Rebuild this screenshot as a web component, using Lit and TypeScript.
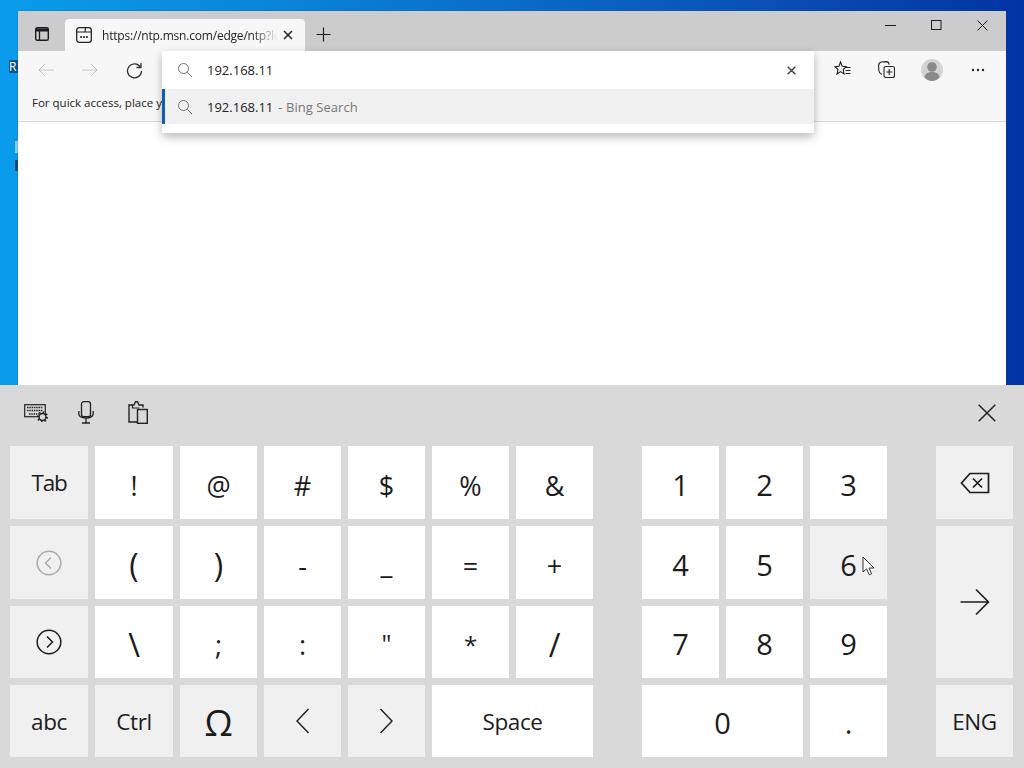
import { LitElement, html, css, svg } from "lit";
import { customElement } from "lit/decorators.js";

const ic = (w: number, h: number, body: unknown, cls = "") =>
  html`<svg class="ic ${cls}" width=${w} height=${h} viewBox="0 0 ${w} ${h}" fill="none" stroke="currentColor" stroke-width="1">${body}</svg>`;

const searchIcon = ic(16, 16, svg`<circle cx="6.5" cy="6.5" r="5"/><path d="M10.2 10.2L15 15"/>`, "search");
const chevL = ic(15, 26, svg`<path d="M13.5 1L2 13l11.5 12" stroke-width="1.4"/>`);
const chevR = ic(15, 26, svg`<path d="M1.5 1L13 13 1.5 25" stroke-width="1.4"/>`);
const circleL = ic(26, 26, svg`<circle cx="13" cy="13" r="11.8" stroke-width="1.5"/><path d="M15 7.5L9.5 13l5.5 5.5" stroke-width="1.5"/>`);
const circleR = ic(26, 26, svg`<circle cx="13" cy="13" r="11.8" stroke-width="1.5"/><path d="M11 7.5l5.5 5.5-5.5 5.5" stroke-width="1.5"/>`);
const backspace = ic(30, 22, svg`<path d="M28.5 1.5H10L1.5 11 10 20.5h18.5z" stroke-width="1.7"/><path d="M13 6.5l9 9M22 6.5l-9 9" stroke-width="1.7"/>`);
const enterArrow = ic(30, 28, svg`<path d="M0.5 14h28M16 1.5L28.5 14 16 26.5" stroke-width="1.6"/>`);

type K = { t?: unknown; c?: string; g?: boolean };
const keys: K[] = [
  { t: "Tab", c: "word tabk", g: true }, { t: "!" }, { t: "@" }, { t: "#" }, { t: "$" }, { t: "%" }, { t: "&" },
  { t: circleL, c: "dim", g: true }, { t: "(", c: "tall" }, { t: ")", c: "tall" }, { t: "-" }, { t: "_", c: "under" }, { t: "=" }, { t: "+" },
  { t: circleR, g: true }, { t: "\\", c: "tall" }, { t: ";" }, { t: ":" }, { t: '"', c: "quote" }, { t: "*", c: "star" }, { t: "/", c: "tall" },
  { t: "abc", c: "word", g: true }, { t: "Ctrl", c: "word", g: true }, { t: "Ω", c: "omega", g: true },
  { t: chevL, g: true }, { t: chevR, g: true }, { t: "Space", c: "word wide" },
];
const nums: K[] = [
  { t: "1" }, { t: "2" }, { t: "3" },
  { t: "4" }, { t: "5" }, { t: "6", g: true, c: "hover" },
  { t: "7" }, { t: "8" }, { t: "9" },
  { t: "0", c: "zero" }, { t: "." },
];

@customElement("app-root")
export class AppRoot extends LitElement {
  static styles = css`
    :host { display: block; width: 1024px; height: 768px; overflow: hidden; position: relative;
      font-family: "Open Sans", "Noto Sans", sans-serif; color: #1c1c1c; }
    * { box-sizing: border-box; }
    .ic { display: block; flex: none; }

    .desktop { height: 385px; position: relative; overflow: hidden;
      background: linear-gradient(90deg, #0a9cec 0%, #0a86dc 25%, #0a6cc6 50%, #0a4fb4 75%, #0233a4 100%); }
    .dicon { position: absolute; left: 9px; top: 60px; width: 9px; height: 13px; background: #0b4f88; color: #fff;
      font: 12px/13px "Open Sans", sans-serif; overflow: hidden; }
    .dmark { position: absolute; left: 15px; width: 3px; background: #bfe0f4; }
    .dmark.a { top: 141px; height: 12px; opacity: .7; }
    .dmark.b { top: 160px; height: 11px; background: #12324e; opacity: .8; }

    .window { position: absolute; left: 18px; top: 11px; width: 988px; height: 374px; background: #fff;
      display: flex; flex-direction: column; box-shadow: 0 0 1px #25506e; }
    .titlebar { height: 40px; background: #cccccc; display: flex; padding-top: 8px; flex: none; }
    .tabs-btn { width: 47px; display: flex; justify-content: center; padding-top: 8px; }
    .tab { width: 240px; height: 32px; background: #f7f7f7; border-radius: 4px 4px 0 0; display: flex; align-items: center;
      padding-left: 11px; font-size: 12px; color: #222; letter-spacing: -.2px; }
    .tab .title { margin-left: 10px; width: 177px; white-space: nowrap; overflow: hidden;
      -webkit-mask-image: linear-gradient(90deg, #000 150px, transparent 176px); mask-image: linear-gradient(90deg, #000 150px, transparent 176px); }
    .tab .x { margin-left: 4px; }
    .plus { margin-left: 11px; margin-top: 8px; }
    .spacer { flex: 1; }
    .controls { display: flex; align-items: flex-start; margin-top: -8px; padding: 9px 18px 0 0; gap: 35px; }

    .toolbar { height: 38px; background: #f7f7f7; display: flex; align-items: center; flex: none; position: relative; padding-left: 20px; }
    .nav { display: flex; align-items: center; gap: 28px; color: #c4c4c4; }
    .nav .reload { color: #333; }
    .right { margin-left: auto; display: flex; align-items: center; color: #222; padding-right: 21px; margin-top: -1px; }
    .right > .ic:nth-child(1) { margin-right: 27px; }
    .right > .ic:nth-child(2) { margin-right: 26px; }
    .right > .ic:nth-child(3) { margin-right: 28px; }

    .favbar { height: 33px; background: #f7f7f7; border-bottom: 1px solid #d9d9d9; padding: 0 0 5px 14px; display: flex; align-items: center;
      font-size: 11.5px; font-weight: 500; color: #222; flex: none; }
    .page { flex: 1; background: #fff; }

    .omnibox { position: absolute; left: 144px; top: 40px; width: 652px; height: 82px; background: #fff;
      box-shadow: 0 4px 10px rgba(0,0,0,.28); border-radius: 0 0 2px 2px; }
    .omni-row { display: flex; align-items: center; padding-left: 15px; font-size: 13px; color: #222; }
    .omni-input { height: 38px; padding-right: 18px; }
    .omni-sug { height: 35px; background: #f0f0f0; border-left: 3px solid #0f5cb4; padding-left: 12px; }
    .omni-row .search { color: #777; }
    .omni-row .txt { margin-left: 14px; }
    .omni-row .clear { margin-left: auto; color: #444; }
    .muted { color: #777; margin-left: 5px; letter-spacing: .05px; }

    .osk { height: 383px; background: #d9d9d9; }
    .osk-top { height: 61px; display: flex; align-items: center; padding: 0 28px 6px 24px; color: #222; }
    .osk-tools { display: flex; align-items: center; }
    .osk-tools .mic { margin-left: 30px; }
    .osk-tools .clip { margin-left: 34px; }
    .osk-close { margin-left: auto; }
    .osk-keys { display: flex; padding-left: 10px; }
    .block { display: grid; grid-template-rows: 73px 73px 72px 72px; gap: 7px; }
    .letters { grid-template-columns: 78px 78px repeat(5, 77px); }
    .numpad { grid-template-columns: repeat(3, 77px); margin-left: 49px; }
    .side { grid-template-columns: 77px; margin-left: 49px; }

    .key { background: #fff; display: flex; align-items: center; justify-content: center; font-size: 27px; line-height: 1;
      color: #1c1c1c; position: relative; padding-top: 5px; }
    .key.g { background: #f0f0f0; }
    .key.word { font-size: 22.5px; padding-top: 2px; letter-spacing: -.4px; }
    .key.tabk { letter-spacing: -1.2px; }
    .key.wide { grid-column: span 2; }
    .key.num { font-size: 29px; padding-top: 3px; }
    .key.zero { grid-column: span 2; }
    .key.omega { font-size: 36px; padding-top: 4px; }
    .key.tall { font-size: 32px; }
    .key.under { padding-top: 1px; }
    .key.quote { padding-top: 3px; font-size: 25px; }
    .key.star { font-size: 24px; padding-top: 6px; }
    .key.dim { color: #aaa; }
    .key.icon { padding-top: 0; }
    .key.enter { grid-row: span 2; }
    .cursor { position: absolute; left: 52px; top: 30px; }
  `;

  private key(k: K, extra = "") {
    const isIcon = typeof k.t !== "string";
    const cls = ["key", k.g ? "g" : "", k.c ?? "", isIcon ? "icon" : "", extra].join(" ");
    return html`<div class=${cls}>${k.t}${k.c === "hover"
      ? html`<svg class="cursor" width="14" height="20" viewBox="0 0 14 20"><path d="M1 1v15l3.6-3.2 2.6 6 2.4-1-2.6-5.8H12z" fill="#fff" stroke="#333" stroke-width="1"/></svg>`
      : ""}</div>`;
  }

  render() {
    return html`
      <div class="desktop">
        <div class="dicon">R</div>
        <div class="dmark a"></div>
        <div class="dmark b"></div>
        <div class="window">
          <div class="titlebar">
            <div class="tabs-btn">
              ${ic(14, 14, svg`<rect x="0.7" y="0.7" width="12.6" height="12.6" rx="1.5" stroke-width="1.4"/><path d="M0.7 3h12.6" stroke-width="3"/><path d="M4.5 4v9" stroke-width="1.3"/>`)}
            </div>
            <div class="tab">
              ${ic(16, 16, svg`<rect x="0.7" y="0.7" width="14.6" height="14.6" rx="2.5" stroke-width="1.3"/><path d="M0.7 5h14.600M9 5l.5-4.300" stroke-width="1.2"/><path d="M4.300 10h1.600M7.200 10h1.600M10.100 10h1.600" stroke-width="1.800"/>`)}
              <span class="title">https://ntp.msn.com/edge/ntp?locale=en</span>
              <span class="x">${ic(10, 10, svg`<path d="M1 1l8 8M9 1l-8 8" stroke-width="1.5"/>`)}</span>
            </div>
            <div class="plus">${ic(15, 15, svg`<path d="M7.5 0.5v14M0.5 7.5h14" stroke-width="1.2"/>`)}</div>
            <div class="spacer"></div>
            <div class="controls">
              ${ic(11, 11, svg`<path d="M0 5.5h11" stroke-width="1"/>`)}
              ${ic(11, 10, svg`<rect x="0.5" y="0.5" width="9.5" height="9" stroke-width="1"/>`)}
              ${ic(11, 11, svg`<path d="M0.5 0.5l10 10M10.5 0.5l-10 10" stroke-width="1"/>`)}
            </div>
          </div>
          <div class="toolbar">
            <div class="nav">
              ${ic(16, 14, svg`<path d="M16 7H1M7 1L1 7l6 6"/>`)}
              ${ic(16, 14, svg`<path d="M0 7h15M9 1l6 6-6 6"/>`)}
              ${ic(17, 17, svg`<path d="M14.5 5.2A7 7 0 1 0 15.5 9M15 1v4.5h-4.5" stroke-width="1.3"/>`, "reload")}
            </div>
            <div class="right">
              ${ic(17, 17, svg`<path d="M6.5 1l1.7 4.200 4 .4-3 2.900.8 4.400L6.500 10.600 3 13l1-4.500L1 5.600l4-.4z" stroke-width="1.100"/><path d="M11.500 6.500h5M11.500 9.500h5M11.500 12.500h5" stroke-width="1"/>`)}
              ${ic(17, 17, svg`<rect x="6" y="5.500" width="10.500" height="11" rx="2" stroke-width="1.100"/><path d="M11.200 8v6M8.300 11h6" stroke-width="1.100"/><path d="M3.800 13.500C2 12.500 1 11.500 .8 9.500L.6 4.500C.6 2.500 2 1.200 3.500 1l5-.4c1.300 0 2.300 1 2.700 3" stroke-width="1.100"/>`)}
              ${html`<svg class="ic" width="22" height="22" viewBox="0 0 22 22"><circle cx="11" cy="11" r="11" fill="#d3d3d3"/><circle cx="11" cy="8" r="4.800" fill="#8a8a8a"/><path d="M3.500 18c.6-3.600 3.500-5 7.500-5s6.900 1.400 7.500 5c-1.800 2.400-4.500 4-7.500 4s-5.700-1.600-7.500-4z" fill="#8a8a8a"/></svg>`}
              ${html`<svg class="ic" width="14" height="4" viewBox="0 0 14 4" fill="#222"><circle cx="2" cy="2" r="1.200"/><circle cx="7" cy="2" r="1.200"/><circle cx="12" cy="2" r="1.200"/></svg>`}
            </div>
          </div>
          <div class="favbar">For quick access, place y</div>
          <div class="page"></div>
          <div class="omnibox">
            <div class="omni-row omni-input">
              ${searchIcon}<span class="txt">192.168.11</span>
              <span class="clear">${ic(9, 9, svg`<path d="M.7.7l7.600 7.600M8.300.7L.7 8.300" stroke-width="1.500"/>`)}</span>
            </div>
            <div class="omni-row omni-sug">${searchIcon}<span class="txt">192.168.11</span><span class="muted">- Bing Search</span></div>
          </div>
        </div>
      </div>
      <div class="osk">
        <div class="osk-top">
          <div class="osk-tools">
            ${ic(24, 18, svg`<rect x="0.700" y="0.700" width="20.600" height="12" stroke-width="1.200"/><path d="M3 3.500h16M3 6.500h16M5 10h10" stroke-width="1.300" stroke-dasharray="1.500 .8"/><circle cx="18.500" cy="13" r="3.500" fill="#d9d9d9" stroke-width="1.500"/><circle cx="18.500" cy="13" r="4.800" stroke-width="1.800" stroke-dasharray="1.500 2.200" fill="none"/>`)}
            ${ic(16, 23, svg`<rect x="3.500" y=".7" width="9" height="15" rx="2.200" stroke-width="1.300"/><path d="M.8 10v2.500c0 3 3 4.500 7.200 4.500s7.200-1.500 7.200-4.500V10M8 17v5M4 22h8" stroke-width="1.300"/>`, "mic")}
            ${ic(20, 23, svg`<path d="M15 6.500V4h-4L9.500 .8 7.500 .8 6 4H1v17h8" stroke-width="1.400"/><rect x="9.500" y="8.500" width="9.800" height="13.800" stroke-width="1.400"/><path d="M4.500 4v3h7" stroke-width="1.200"/>`, "clip")}
          </div>
          ${ic(18, 18, svg`<path d="M.7.7l16.600 16.600M17.300.7L.7 17.300" stroke-width="1.500"/>`, "osk-close")}
        </div>
        <div class="osk-keys">
          <div class="block letters">${keys.map((k) => this.key(k))}</div>
          <div class="block numpad">${nums.map((k) => this.key(k, "num"))}</div>
          <div class="block side">
            ${this.key({ t: backspace, g: true })}
            ${this.key({ t: enterArrow, g: true }, "enter")}
            ${this.key({ t: "ENG", c: "word", g: true })}
          </div>
        </div>
      </div>
    `;
  }
}
